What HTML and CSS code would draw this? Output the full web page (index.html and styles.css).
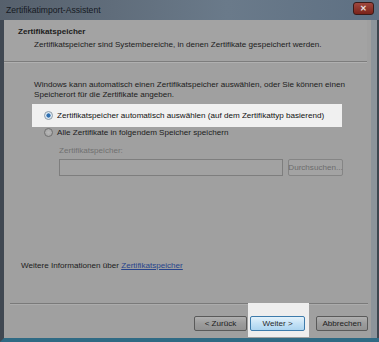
FILE: index.html
```html
<!DOCTYPE html>
<html lang="de">
<head>
  <meta charset="UTF-8" />
  <title>Zertifikatimport-Assistent</title>
  <link rel="stylesheet" href="styles.css">
</head>
<body>

  <div class="window">
    <div class="titlebar">
      <span class="title">Zertifikatimport-Assistent</span>
      <span class="close">&#x2715;</span>
    </div>

    <div class="frame">
      <div class="content">
        <div class="header">
          <div class="heading">Zertifikatspeicher</div>
          <div class="subheading">Zertifikatspeicher sind Systembereiche, in denen Zertifikate gespeichert werden.</div>
        </div>

        <div class="main">
          <p class="intro">Windows kann automatisch einen Zertifikatspeicher auswählen, oder Sie können einen Speicherort für die Zertifikate angeben.</p>

          <div class="option highlight">
            <span class="radio checked"></span>
            <span>Zertifikatspeicher automatisch auswählen (auf dem Zertifikattyp basierend)</span>
          </div>
          <div class="option">
            <span class="radio"></span>
            <span>Alle Zertifikate in folgendem Speicher speichern</span>
          </div>

          <div class="store">
            <div class="store-label">Zertifikatspeicher:</div>
            <div class="store-row">
              <div class="store-input"></div>
              <div class="btn disabled">Durchsuchen...</div>
            </div>
          </div>

          <div class="more">Weitere Informationen über <a class="link">Zertifikatspeicher</a></div>
        </div>

        <div class="footer">
          <div class="btn back">&lt; Zurück</div>
          <div class="spot">
            <div class="btn primary">Weiter &gt;</div>
          </div>
          <div class="btn cancel">Abbrechen</div>
        </div>
      </div>
      <div class="edge"></div>
    </div>
  </div>

</body>
</html>
```

FILE: styles.css
```css
  body {
    margin: 0;
    background: #3a4048;
    font-family: "Liberation Sans", Arial, sans-serif;
    font-size: 8.1px;
    color: #1c1c1c;
  }
  .window {
    width: 379px;
    height: 342px;
    display: flex;
    flex-direction: column;
    background: #2f3a44;
  }
  .titlebar {
    height: 20px;
    display: flex;
    align-items: center;
    justify-content: space-between;
    padding: 0 5px 0 6px;
    background: linear-gradient(to right, #56606c, #6a7a8a 60%, #5e7083);
    flex-shrink: 0;
  }
  .title {
    font-size: 8.6px;
    color: #15191f;
  }
  .close {
    width: 19px;
    height: 11px;
    margin-top: -3px;
    background: linear-gradient(#a0483f, #7a2219);
    border: 1px solid #3a1a18;
    border-radius: 3px;
    color: #e8e0e0;
    font-size: 8px;
    font-weight: bold;
    display: flex;
    align-items: center;
    justify-content: center;
  }
  .frame {
    flex: 1;
    display: flex;
    border-left: 4px solid #404852;
    border-bottom: 4px solid #2f6a84;
  }
  .content {
    flex: 1;
    display: flex;
    flex-direction: column;
    background: #a0a0a0;
  }
  .edge {
    width: 6px;
    background: #8d949b;
    border-right: 2px solid #3e4650;
  }
  .header {
    box-sizing: border-box;
    height: 42px;
    margin: 0 4px 0 0;
    padding: 7px 0 0 14px;
    background: #a3a3a3;
    border-bottom: 1px solid #7d7d7d;
    box-shadow: 0 1px 0 #b0b0b0;
  }
  .heading {
    font-weight: bold;
    line-height: 10px;
  }
  .subheading {
    margin: 3px 0 0 16px;
    line-height: 10px;
  }
  .main {
    flex: 1;
    padding: 0 0 0 30px;
  }
  .intro {
    margin: 18px 0 0 0;
    width: 325px;
    line-height: 10px;
  }
  .option {
    display: flex;
    align-items: center;
    gap: 4px;
    height: 11px;
    padding-left: 10px;
  }
  .option.highlight {
    height: 23px;
    width: 298px;
    margin: 4px 0 0 -2px;
    padding-left: 12px;
    background: #f0f0f0;
    color: #111;
  }
  .radio {
    width: 7px;
    height: 7px;
    border-radius: 50%;
    border: 1px solid #707070;
    background: radial-gradient(#b8b8b8, #a0a0a0);
  }
  .radio.checked {
    border-color: #8a9aa8;
    background: radial-gradient(circle, #2f6fb0 0 1.8px, #d8e6f2 2.4px, #f4f4f4);
  }
  .store {
    margin: 8px 0 0 25px;
  }
  .store-label {
    color: #707070;
    line-height: 10px;
  }
  .store-row {
    display: flex;
    gap: 5px;
    margin-top: 3px;
  }
  .store-input {
    width: 222px;
    height: 15px;
    border: 1px solid #7e7e7e;
    background: #a2a2a2;
  }
  .btn {
    box-sizing: border-box;
    display: flex;
    align-items: center;
    justify-content: center;
    height: 15px;
    border: 1px solid #5a5a5a;
    border-radius: 2px;
    background: linear-gradient(#b0b0b0, #9c9c9c 50%, #929292);
    color: #1c1c1c;
  }
  .btn.disabled {
    width: 55px;
    height: 17px;
    border-color: #858585;
    background: #a3a3a3;
    color: #6c6c6c;
  }
  .more {
    margin: 85px 0 0 -13px;
  }
  .link {
    color: #27448c;
    text-decoration: underline;
  }
  .footer {
    height: 34px;
    display: flex;
    align-items: flex-start;
    justify-content: flex-end;
    margin: 0 3px 0 6px;
    border-top: 1px solid #7a7a7a;
    box-shadow: inset 0 1px 0 #acacac;
  }
  .footer > .btn {
    margin-top: 12px;
  }
  .back {
    width: 53px;
  }
  .cancel {
    width: 52px;
  }
  .spot {
    box-sizing: border-box;
    height: 34px;
    margin: -1px 7px 0 1px;
    padding: 13px 4px 0 2px;
    background: #eeeeee;
  }
  .btn.primary {
    width: 55px;
    border-color: #3d7bab;
    background: linear-gradient(#e4f2fb, #c4e2f6 50%, #acd4ef);
    color: #2a2a2a;
  }
```
